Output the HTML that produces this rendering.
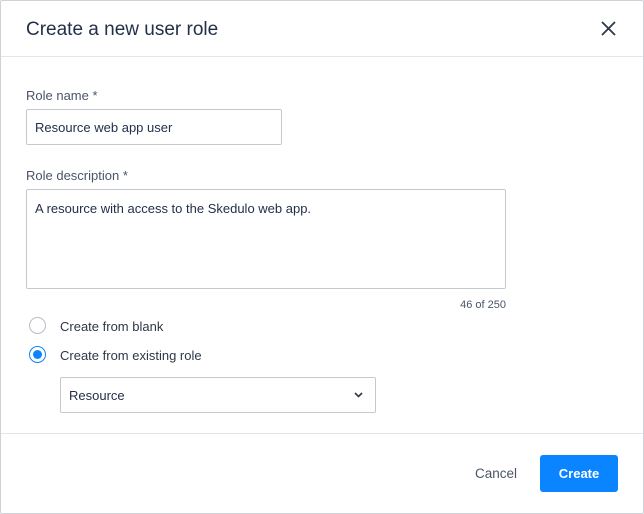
<!DOCTYPE html>
<html><head><style>
*{box-sizing:border-box;margin:0;padding:0}
body{width:644px;height:514px;background:#fff;font-family:"Liberation Sans",sans-serif;color:#223049;position:relative;overflow:hidden}
.frame{position:absolute;left:0;top:0;width:644px;height:514px;border:1px solid #cfd3d8;border-radius:2px}
.a{position:absolute}
.lbl{font-size:13px;color:#4a5568}
.box{border:1px solid #c4c9d0;border-radius:2px;background:#fff}
.txt{font-size:13px;color:#223049}
.hr{position:absolute;left:1px;right:1px;height:1px;background:#e2e5e9}
.radio{width:17px;height:17px;border-radius:50%;border:1px solid #b8bec6;background:#fff}
</style></head><body>
<div class="frame"></div>
<div class="a" style="left:26px;top:19px;font-size:19px;color:#223049">Create a new user role</div>
<svg class="a" style="left:601px;top:21px" width="15" height="15" viewBox="0 0 15 15"><path d="M1 1L14 14M14 1L1 14" stroke="#2d3748" stroke-width="1.8"/></svg>
<div class="hr" style="top:56px"></div>
<div class="a lbl" style="left:26px;top:88px">Role name *</div>
<div class="a box" style="left:26px;top:109px;width:256px;height:36px"></div>
<div class="a txt" style="left:35px;top:120px">Resource web app user</div>
<div class="a lbl" style="left:26px;top:168px">Role description *</div>
<div class="a box" style="left:26px;top:189px;width:480px;height:100px"></div>
<div class="a txt" style="left:35px;top:201px">A resource with access to the Skedulo web app.</div>
<div class="a" style="left:455px;top:299px;width:51px;text-align:right;font-size:11px;color:#4a5568">46 of 250</div>
<div class="a radio" style="left:29px;top:317px"></div>
<div class="a txt" style="left:60px;top:319px;color:#2d3748">Create from blank</div>
<div class="a radio" style="left:29px;top:346px;border:1.5px solid #0a84ff"><div style="position:absolute;left:3px;top:3px;width:9px;height:9px;border-radius:50%;background:#0a84ff"></div></div>
<div class="a txt" style="left:60px;top:348px;color:#2d3748">Create from existing role</div>
<div class="a box" style="left:60px;top:377px;width:316px;height:36px"></div>
<div class="a txt" style="left:69px;top:388px">Resource</div>
<svg class="a" style="left:354px;top:392px" width="9" height="6" viewBox="0 0 9 6"><path d="M1 1L4.5 4.5L8 1" stroke="#2d3748" stroke-width="1.6" fill="none"/></svg>
<div class="hr" style="top:433px"></div>
<div class="a" style="left:475px;top:466px;font-size:13.5px;color:#4a5568">Cancel</div>
<div class="a" style="left:540px;top:455px;width:78px;height:37px;background:#0a84ff;border-radius:3px;color:#fff;font-size:13px;font-weight:bold;text-align:center;line-height:37px">Create</div>
</body></html>
